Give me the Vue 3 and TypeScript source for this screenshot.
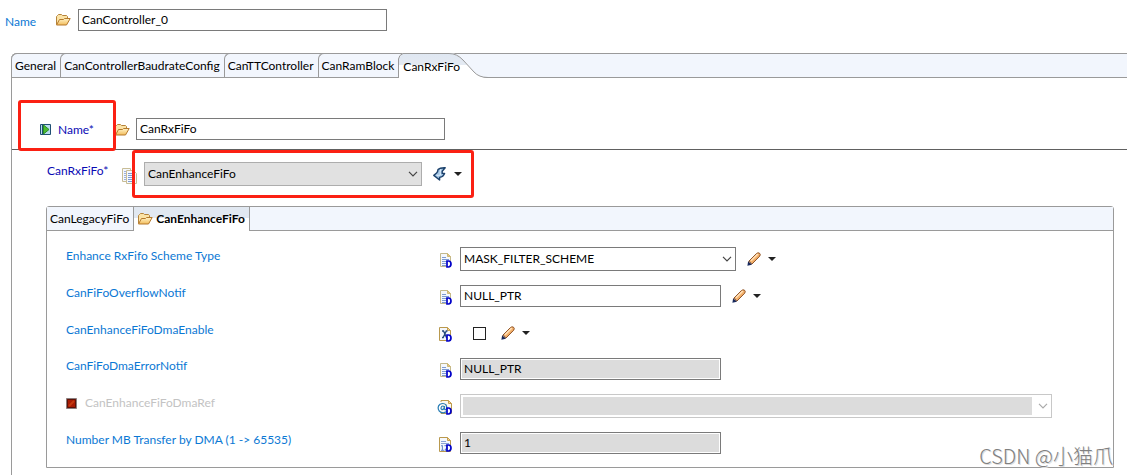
<script setup lang="ts">
import { ref } from 'vue'

type Kind = 'text' | 'calc' | 'ref' | 'number'
interface Field {
  id: string
  label: string
  icon: Kind
  control: 'select' | 'input' | 'check'
  value: string
  disabled?: boolean
  wide?: boolean
  editable?: boolean
}

const outerTabs = ['General', 'CanControllerBaudrateConfig', 'CanTTController', 'CanRamBlock', 'CanRxFiFo']
const activeOuter = ref('CanRxFiFo')

const controllerName = ref('CanController_0')
const fifoName = ref('CanRxFiFo')
const fifoType = ref('CanEnhanceFiFo')
const dmaEnabled = ref(false)

const fields = ref<Field[]>([
  { id: 'scheme', label: 'Enhance RxFifo Scheme Type', icon: 'text', control: 'select', value: 'MASK_FILTER_SCHEME', editable: true },
  { id: 'overflow', label: 'CanFiFoOverflowNotif', icon: 'text', control: 'input', value: 'NULL_PTR', editable: true },
  { id: 'dma', label: 'CanEnhanceFiFoDmaEnable', icon: 'calc', control: 'check', value: '', editable: true },
  { id: 'dmaerror', label: 'CanFiFoDmaErrorNotif', icon: 'text', control: 'input', value: 'NULL_PTR', disabled: true },
  { id: 'dmaref', label: 'CanEnhanceFiFoDmaRef', icon: 'ref', control: 'select', value: '', disabled: true, wide: true },
  { id: 'transfer', label: 'Number MB Transfer by DMA (1 -> 65535)', icon: 'number', control: 'input', value: '1', disabled: true },
])
</script>

<template>
  <main class="page">
    <svg class="defs" width="0" height="0" aria-hidden="true">
      <defs>
        <linearGradient id="gold" x1="0" y1="0" x2="0" y2="1">
          <stop offset="0" stop-color="#fff3c8" />
          <stop offset="1" stop-color="#f3bd5c" />
        </linearGradient>
        <linearGradient id="tabshade" x1="0" y1="0" x2="0" y2="1">
          <stop offset="0" stop-color="#dfe7f2" />
          <stop offset="1" stop-color="#e4eaf2" />
        </linearGradient>
        <symbol id="folder" viewBox="0 0 16 12">
          <path d="M1.5 10.5V2.5L2.5 1.5L3.5.5H6.5L7.5 1.5H11.5L12.5 2.5V4.5" fill="#fbe3a6" stroke="#b5833a" />
          <path d="M1.5 11L4.5 5.5H8.5L9.5 4.5H15.2L11.5 11Z" fill="url(#gold)" stroke="#b5792c" stroke-linejoin="round" />
        </symbol>
        <symbol id="caret" viewBox="0 0 8 4"><path d="M0 0H8L4 4Z" fill="#222" /></symbol>
        <symbol id="chevron" viewBox="0 0 10 6"><path d="M1 .8L5 4.8L9 .8" fill="none" stroke="currentColor" stroke-width="1.2" /></symbol>
        <symbol id="pencil" viewBox="0 0 14 14">
          <path d="M1.4 11.8L2 9L9.4 1.6Q11 .2 12.5 1.2Q13.9 2.5 12.7 4.2L5 12Z" fill="#f4b06a" stroke="#8d5226" stroke-width="1" />
          <path d="M4 8.8L10.8 2" stroke="#ffe0b8" stroke-width="1.6" />
          <path d="M.4 13.8L1.1 9.6L4.9 12.8Z" fill="#17295e" />
          <path d="M2 9L5 12" stroke="#7b6a68" />
        </symbol>
        <symbol id="dmark" viewBox="0 0 6 8"><path d="M1 1H2.4Q5 1 5 4Q5 7 2.4 7H1Z" fill="#fff" stroke="#0000c8" stroke-width="1.7" /></symbol>
        <symbol id="doc-text" viewBox="0 0 14 16">
          <path d="M1.5.5H8.5L11.5 3.5V13.5H1.5Z" fill="#f5f8fd" stroke="#c3b98d" />
          <path d="M8.5.5V3.5H11.5Z" fill="#e2c887" stroke="#cfb873" />
          <path d="M3 4.5H7M3 6.5H10M3 8.5H8M3 10.5H7M3 12.5H7" stroke="#7d9bd2" />
          <use href="#dmark" x="7" y="7" width="6" height="8" />
        </symbol>
        <symbol id="doc-calc" viewBox="0 0 14 16">
          <path d="M.5.5H8.5L11.5 3.5V13.5H.5Z" fill="#f4f7fc" stroke="#b9994e" />
          <path d="M8.5.5V3.5H11.5Z" fill="#f5d99d" stroke="#c8a04f" />
          <path d="M3 4H4.5L7.5 10.5H9M8.5 4H7.3L4.2 10.5H3" fill="none" stroke="#24497d" stroke-width="1.3" />
          <use href="#dmark" x="7" y="7" width="6" height="8" />
        </symbol>
        <symbol id="doc-ref" viewBox="0 0 16 16">
          <path d="M4 2V.5H11.5L14.5 3.5V13.5H4V12" fill="#fbf8ee" stroke="#b9994e" />
          <path d="M11.5.5V3.5H14.5Z" fill="#f5d99d" stroke="#c8a04f" />
          <path d="M9.7 11.6Q5.5 14.2 2.2 11Q-.3 6.9 3 4.3Q6.6 2.4 9.1 5Q10.7 9 8.4 9.8Q7 9.8 7.5 6M7.3 7.5Q6.6 9.9 4.9 9.6Q3.3 8.6 4.5 6.7Q6 5.1 7.3 7.2" fill="none" stroke="#287db5" stroke-width="1.2" />
          <use href="#dmark" x="9" y="7" width="6" height="8" />
        </symbol>
        <symbol id="doc-number" viewBox="0 0 14 16">
          <path d="M.5.5H8.5L11.5 3.5V14.5H.5Z" fill="#f5f8fd" stroke="#b9994e" />
          <path d="M8.5.5V3.5H11.5Z" fill="#f5d99d" stroke="#c8a04f" />
          <path d="M2 4.5H7M2 6.5H10" stroke="#8ba4d6" />
          <path d="M2 9L3.4 8.4V13M2 13.3H5M5.4 8.7H8V10.5L5.8 13.2H8" fill="none" stroke="#6283c5" />
          <use href="#dmark" x="7" y="7" width="6" height="8" />
        </symbol>
      </defs>
    </svg>

    <header class="top">
      <label class="blue top-label" for="controller">Name</label>
      <svg class="folder top-folder"><use href="#folder" /></svg>
      <input id="controller" v-model="controllerName" class="box name-box" type="text" />
    </header>

    <section class="outer">
      <nav class="tabs" role="tablist">
        <button
          v-for="tab in outerTabs"
          :key="tab"
          type="button"
          role="tab"
          class="tab"
          :class="{ curved: tab === activeOuter }"
          :aria-selected="tab === activeOuter"
          @click="activeOuter = tab"
        >
          <svg v-if="tab === activeOuter" class="curve" viewBox="0 0 90 25" aria-hidden="true">
            <path d="M0 25V6L5 0H53Q60 1 65 7L76 19Q81 24 89 25Z" fill="#fff" />
            <path d="M0 12V6L5 0H53Q60 1 65 7L69 12Z" fill="url(#tabshade)" />
            <path d="M.5 25V6Q1 2 5 .5H51Q59 .5 65 7L76 19Q81 24.5 90 24.5" fill="none" stroke="#9a9a9a" />
          </svg>
          <span>{{ tab }}</span>
        </button>
      </nav>

      <div class="name-row">
        <div class="mark mark-name">
          <svg width="11" height="11" viewBox="0 0 11 11" aria-hidden="true">
            <path d="M.5.5H10.5V10.5H.5Z" fill="#b8dcf0" stroke="#1f4f72" />
            <path d="M2.5 1V10" stroke="#1f4f72" />
            <path d="M3.5 1L9 5.5L3.5 10Z" fill="#4cbb30" stroke="#2a8f24" />
          </svg>
          <label class="navy" for="fifo-name">Name*</label>
        </div>
        <svg class="folder row-folder"><use href="#folder" /></svg>
        <input id="fifo-name" v-model="fifoName" class="box name-box" type="text" />
      </div>

      <div class="type-row">
        <label class="navy type-label" for="fifo-type">CanRxFiFo*</label>
        <svg class="copy" width="15" height="16" viewBox="0 0 15 16" aria-hidden="true">
          <path d="M.5.5H8.5V13.5H.5Z" fill="#f5f8fd" stroke="#c8bd96" />
          <path d="M2 3.5H5M2 5.5H5M2 7.5H5M2 9.5H5M2 11.5H5" stroke="#9db2dc" />
          <path d="M4.5 2.5H11.5L14.5 5.5V15.5H4.5Z" fill="#f5f8fd" stroke="#c8bd96" />
          <path d="M6 5.5H10M6 7.5H13M6 9.5H13M6 11.5H13M6 13.5H11" stroke="#7d9bd2" />
        </svg>
        <div class="mark mark-type">
          <span class="pick type-pick">
            <select id="fifo-type" v-model="fifoType" class="box filled">
              <option>CanEnhanceFiFo</option>
              <option>CanLegacyFiFo</option>
            </select>
            <svg class="chevron"><use href="#chevron" /></svg>
          </span>
          <button type="button" class="tool" aria-label="Change type">
            <svg width="14" height="14" viewBox="0 0 14 14">
              <path d="M5 2.6Q7 .6 12.2.8L9.2 4.2V6.4H11.6Q10.4 9.6 6.6 10.4V13L.8 8.4L3.6 6Q4.8 5 5 2.6Z" fill="#a3c6e6" stroke="#1c416b" stroke-width="1.4" stroke-linejoin="round" />
              <path d="M7.5 2.4Q6.8 6 7.4 8Q5.5 8.6 3.5 8.2" fill="none" stroke="#e3f1fc" />
            </svg>
            <svg class="caret"><use href="#caret" /></svg>
          </button>
        </div>
      </div>

      <section class="inner">
        <nav class="tabs" role="tablist">
          <button type="button" role="tab" class="tab square" aria-selected="false"><span>CanLegacyFiFo</span></button>
          <button type="button" role="tab" class="tab square current" aria-selected="true">
            <svg class="folder"><use href="#folder" /></svg><span>CanEnhanceFiFo</span>
          </button>
        </nav>
        <div class="fields">
          <div v-for="field in fields" :key="field.id" class="field">
            <div class="label-cell">
              <svg v-if="field.id === 'dmaref'" class="stop" width="11" height="11" viewBox="0 0 11 11" aria-hidden="true">
                <path d="M.5.5H10.5V10.5H.5Z" fill="#a81c04" stroke="#8b8080" />
                <path d="M1.5 1.5H9.5V9.5H1.5Z" fill="none" stroke="#5c1208" />
                <path d="M3 8L8 3" stroke="#c53a10" stroke-width="2" />
              </svg>
              <label :for="field.id" :class="field.id === 'dmaref' ? 'faded' : 'blue'">{{ field.label }}</label>
            </div>
            <svg class="kind" :class="{ 'kind-ref': field.icon === 'ref' }"><use :href="'#doc-' + field.icon" /></svg>
            <span v-if="field.control === 'select'" class="pick" :class="field.wide ? 'wide' : 'medium'">
              <select :id="field.id" v-model="field.value" class="box" :class="{ pale: field.disabled }" :disabled="field.disabled">
                <option>{{ field.value }}</option>
              </select>
              <svg class="chevron" :class="{ dim: field.disabled }"><use href="#chevron" /></svg>
            </span>
            <input v-else-if="field.control === 'input'" :id="field.id" v-model="field.value" class="box value" type="text" :disabled="field.disabled" />
            <input v-else :id="field.id" v-model="dmaEnabled" class="tick" type="checkbox" />
            <button v-if="field.editable" type="button" class="tool" :aria-label="'Edit ' + field.label">
              <svg width="14" height="14"><use href="#pencil" /></svg>
              <svg class="caret"><use href="#caret" /></svg>
            </button>
          </div>
        </div>
      </section>
    </section>
    <p class="credit">CSDN @小猫爪</p>
  </main>
</template>

<style>
body {
  background: #fff;
}
</style>

<style scoped>
.page {
  position: relative;
  display: flex;
  flex-direction: column;
  box-sizing: border-box;
  min-height: 100vh;
  padding: 9px 0 0;
  font: 12px/16px Lato, "Open Sans", sans-serif;
  color: #000;
}
.defs {
  position: absolute;
}
svg {
  display: block;
  flex: none;
}
input,
select,
button {
  box-sizing: border-box;
  margin: 0;
  font: inherit;
  color: inherit;
}
.blue {
  color: #0b78d4;
}
.navy {
  color: #0a0ab4;
}
.faded {
  color: #c3c3c3;
}
.box {
  height: 22px;
  padding: 0 4px 1px 3px;
  border: 1px solid #7a7a7a;
  border-radius: 0;
  background: #fff;
  opacity: 1;
  appearance: none;
}
.box:disabled {
  background: #dcdcdc;
  box-shadow: inset 0 0 0 1px #fff;
  color: #000;
}
.name-box {
  width: 309px;
}
.folder {
  width: 16px;
  height: 12px;
}
.top {
  display: flex;
  align-items: center;
  padding-left: 5px;
}
.top-label {
  width: 50px;
  padding-top: 4px;
}
.top-folder {
  margin-right: 7px;
}
.outer {
  display: flex;
  flex: 1;
  flex-direction: column;
  margin: 22px 0 0 11px;
  border-left: 1px solid #9a9a9a;
  border-top-left-radius: 6px;
}
.tabs {
  display: flex;
  box-sizing: border-box;
  height: 25px;
  border-top: 1px solid #9a9a9a;
  border-bottom: 1px solid #9a9a9a;
  background: #f2f6fd;
}
.outer > .tabs {
  margin-left: -1px;
  border-top-left-radius: 6px;
}
.tab {
  position: relative;
  height: 24px;
  margin-top: -1px;
  padding: 1px 4px 0 3px;
  border: solid #9a9a9a;
  border-width: 1px 0 0 1px;
  border-top-left-radius: 6px;
  background: transparent;
  white-space: nowrap;
}
.tab span {
  position: relative;
}
.curved {
  height: 25px;
  padding-left: 4px;
  border-color: transparent;
}
.curve {
  position: absolute;
  top: -1px;
  left: -1px;
  width: 90px;
  height: 25px;
}
.name-row {
  display: flex;
  align-items: center;
  height: 71px;
  border-bottom: 1px solid #606060;
}
.name-row .name-box {
  margin-top: 30px;
}
.mark {
  z-index: 1;
  display: flex;
  box-sizing: border-box;
  align-items: center;
  border: 3px solid #fb2013;
  border-radius: 3px;
}
.mark-name {
  gap: 7px;
  width: 98px;
  height: 51px;
  margin: 24px 0 0 6px;
  padding: 8px 0 0 19px;
}
.row-folder {
  margin: 32px 6px 0 -2px;
}
.type-row {
  display: flex;
  height: 48px;
  padding-left: 35px;
}
.type-label {
  width: 75px;
  padding-top: 13px;
}
.copy {
  margin-top: 18px;
}
.mark-type {
  width: 342px;
  height: 48px;
  margin-left: -5px;
  padding-left: 9px;
}
.pick {
  position: relative;
  display: block;
}
.pick .box {
  width: 100%;
  height: 24px;
}
.pick .filled {
  border-color: #adadad;
  background: #e1e1e1;
}
.pick .pale {
  border-color: #c8c8c8;
  background: linear-gradient(#dcdcdc, #dcdcdc) 2px 2px / calc(100% - 21px) calc(100% - 4px) no-repeat #fff;
  box-shadow: none;
}
.type-pick {
  width: 278px;
}
.chevron {
  position: absolute;
  top: 9px;
  right: 4px;
  width: 10px;
  height: 6px;
  color: #444;
  pointer-events: none;
}
.dim {
  color: #aaa;
}
.tool {
  display: flex;
  align-items: center;
  gap: 7px;
  margin-left: 11px;
  padding: 0;
  border: 0;
  background: none;
}
.caret {
  width: 8px;
  height: 4px;
}
.inner {
  margin: 8px 13px 0 34px;
  border: 1px solid #9a9a9a;
  border-radius: 3px 3px 0 0;
}
.inner .tabs {
  border-top: 0;
  height: 24px;
}
.square {
  height: 23px;
  margin: 0;
  padding: 0 4px 0 3px;
  border-width: 0 1px 0 0;
  border-radius: 0;
}
.current {
  display: flex;
  align-items: center;
  gap: 3px;
  height: 24px;
  background: linear-gradient(#e1e8f1 11px, #fff 11px);
  font-weight: 700;
}
.fields {
  display: flex;
  flex-direction: column;
  gap: 14px;
  padding: 16px 19px 13px;
}
.field {
  display: flex;
  align-items: center;
}
.label-cell {
  display: flex;
  align-items: center;
  gap: 8px;
  width: 373px;
  height: 16px;
  margin-bottom: 6px;
}
.kind {
  width: 14px;
  height: 16px;
  margin: 4px 7px 0 0;
}
.kind-ref {
  width: 16px;
  margin-left: -2px;
}
.medium {
  width: 276px;
}
.wide {
  width: 592px;
}
.value {
  width: 261px;
}
.tick {
  width: 13px;
  height: 13px;
  margin: 6px 4px 4px 13px;
  border: 1px solid #222;
  background: #fff;
  appearance: none;
}
.tick:checked {
  background: #222;
}
.credit {
  position: absolute;
  right: 14px;
  bottom: 5px;
  margin: 0;
  font: 300 20px/28px "Noto Sans CJK SC", sans-serif;
  color: #808080;
  text-shadow: 1px 1px 0 #ddd;
}
</style>
